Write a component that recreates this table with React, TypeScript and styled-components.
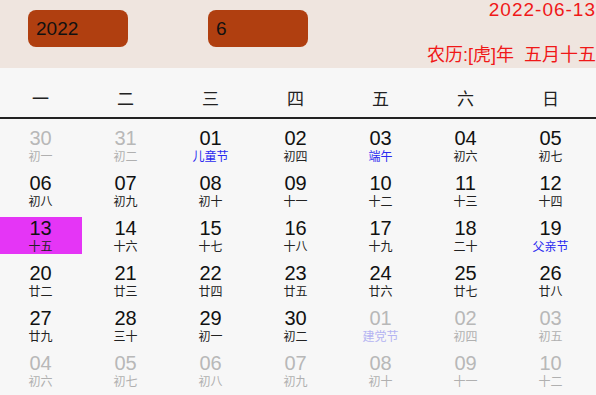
import React from 'react'
import styled, { createGlobalStyle, css } from 'styled-components'

const GlobalStyle = createGlobalStyle`
  html, body {
    margin: 0;
    padding: 0;
    background: #f7f7f7;
  }
  body {
    font-family: 'Liberation Sans', 'Noto Sans CJK SC', sans-serif;
    color: #111;
  }
`

const Wrapper = styled.div`
  width: 596px;
  height: 395px;
  overflow: hidden;
  background: #f7f7f7;
`

const Header = styled.div`
  height: 68px;
  background: #efe5df;
  display: flex;
  justify-content: space-between;
`

const Pickers = styled.div`
  display: flex;
  align-items: flex-start;
  gap: 80px;
  padding: 10px 0 0 28px;
`

const Picker = styled.div`
  width: 92px;
  height: 37px;
  padding-left: 8px;
  border-radius: 8px;
  background: #b03f10;
  display: flex;
  align-items: center;
  font-size: 19px;
  color: #111;
`

const Today = styled.div`
  display: flex;
  flex-direction: column;
  align-items: flex-end;
  justify-content: space-between;
  color: #f01818;
  padding: 0 0 3px 0;
`

const TodayDate = styled.div`
  font-size: 19px;
  line-height: 20px;
  letter-spacing: 1px;
`

const TodayLunar = styled.div`
  font-size: 18px;
  line-height: 20px;
  white-space: pre;
`

const Weekdays = styled.div`
  display: grid;
  grid-template-columns: repeat(7, 83px);
  column-gap: 2px;
  margin-left: -1px;
  height: 48px;
  padding-top: 1px;
  align-items: center;
  border-bottom: 2px solid #222;
  font-size: 17px;
  color: #222;
`

const Weekday = styled.div`
  text-align: center;
  padding-top: 8px;
`

const Days = styled.div`
  display: grid;
  grid-template-columns: repeat(7, 83px);
  grid-auto-rows: 37px;
  column-gap: 2px;
  row-gap: 8px;
  margin-left: -1px;
  padding-top: 8px;
`

const Cell = styled.div<{ $today?: boolean; $other?: boolean }>`
  display: flex;
  flex-direction: column;
  align-items: center;
  background: ${({ $today }) => ($today ? '#e535f6' : 'transparent')};
  color: ${({ $other }) => ($other ? '#b8b8b8' : '#111')};
`

const DayNum = styled.div`
  font-size: 20px;
  line-height: 23px;
`

const Lunar = styled.div<{ $festival?: boolean; $other?: boolean }>`
  font-size: 12px;
  line-height: 14px;
  color: ${({ $other }) => ($other ? '#b0b0b0' : '#222')};
  ${({ $festival, $other }) =>
    $festival &&
    css`
      color: ${$other ? '#b4b4f2' : '#2a2af0'};
    `}
`

type Day = { d: string; lunar: string; festival?: boolean; other?: boolean; today?: boolean }

const weekNames = ['一', '二', '三', '四', '五', '六', '日']

const days: Day[] = [
  { d: '30', lunar: '初一', other: true },
  { d: '31', lunar: '初二', other: true },
  { d: '01', lunar: '儿童节', festival: true },
  { d: '02', lunar: '初四' },
  { d: '03', lunar: '端午', festival: true },
  { d: '04', lunar: '初六' },
  { d: '05', lunar: '初七' },
  { d: '06', lunar: '初八' },
  { d: '07', lunar: '初九' },
  { d: '08', lunar: '初十' },
  { d: '09', lunar: '十一' },
  { d: '10', lunar: '十二' },
  { d: '11', lunar: '十三' },
  { d: '12', lunar: '十四' },
  { d: '13', lunar: '十五', today: true },
  { d: '14', lunar: '十六' },
  { d: '15', lunar: '十七' },
  { d: '16', lunar: '十八' },
  { d: '17', lunar: '十九' },
  { d: '18', lunar: '二十' },
  { d: '19', lunar: '父亲节', festival: true },
  { d: '20', lunar: '廿二' },
  { d: '21', lunar: '廿三' },
  { d: '22', lunar: '廿四' },
  { d: '23', lunar: '廿五' },
  { d: '24', lunar: '廿六' },
  { d: '25', lunar: '廿七' },
  { d: '26', lunar: '廿八' },
  { d: '27', lunar: '廿九' },
  { d: '28', lunar: '三十' },
  { d: '29', lunar: '初一' },
  { d: '30', lunar: '初二' },
  { d: '01', lunar: '建党节', festival: true, other: true },
  { d: '02', lunar: '初四', other: true },
  { d: '03', lunar: '初五', other: true },
  { d: '04', lunar: '初六', other: true },
  { d: '05', lunar: '初七', other: true },
  { d: '06', lunar: '初八', other: true },
  { d: '07', lunar: '初九', other: true },
  { d: '08', lunar: '初十', other: true },
  { d: '09', lunar: '十一', other: true },
  { d: '10', lunar: '十二', other: true },
]

export default function App() {
  return (
    <Wrapper>
      <GlobalStyle />
      <Header>
        <Pickers>
          <Picker>2022</Picker>
          <Picker>6</Picker>
        </Pickers>
        <Today>
          <TodayDate>2022-06-13</TodayDate>
          <TodayLunar>{'农历:[虎]年  五月十五'}</TodayLunar>
        </Today>
      </Header>
      <Weekdays>
        {weekNames.map((w) => (
          <Weekday key={w}>{w}</Weekday>
        ))}
      </Weekdays>
      <Days>
        {days.map((day, i) => (
          <Cell key={i} $today={day.today} $other={day.other}>
            <DayNum>{day.d}</DayNum>
            <Lunar $festival={day.festival} $other={day.other}>
              {day.lunar}
            </Lunar>
          </Cell>
        ))}
      </Days>
    </Wrapper>
  )
}
